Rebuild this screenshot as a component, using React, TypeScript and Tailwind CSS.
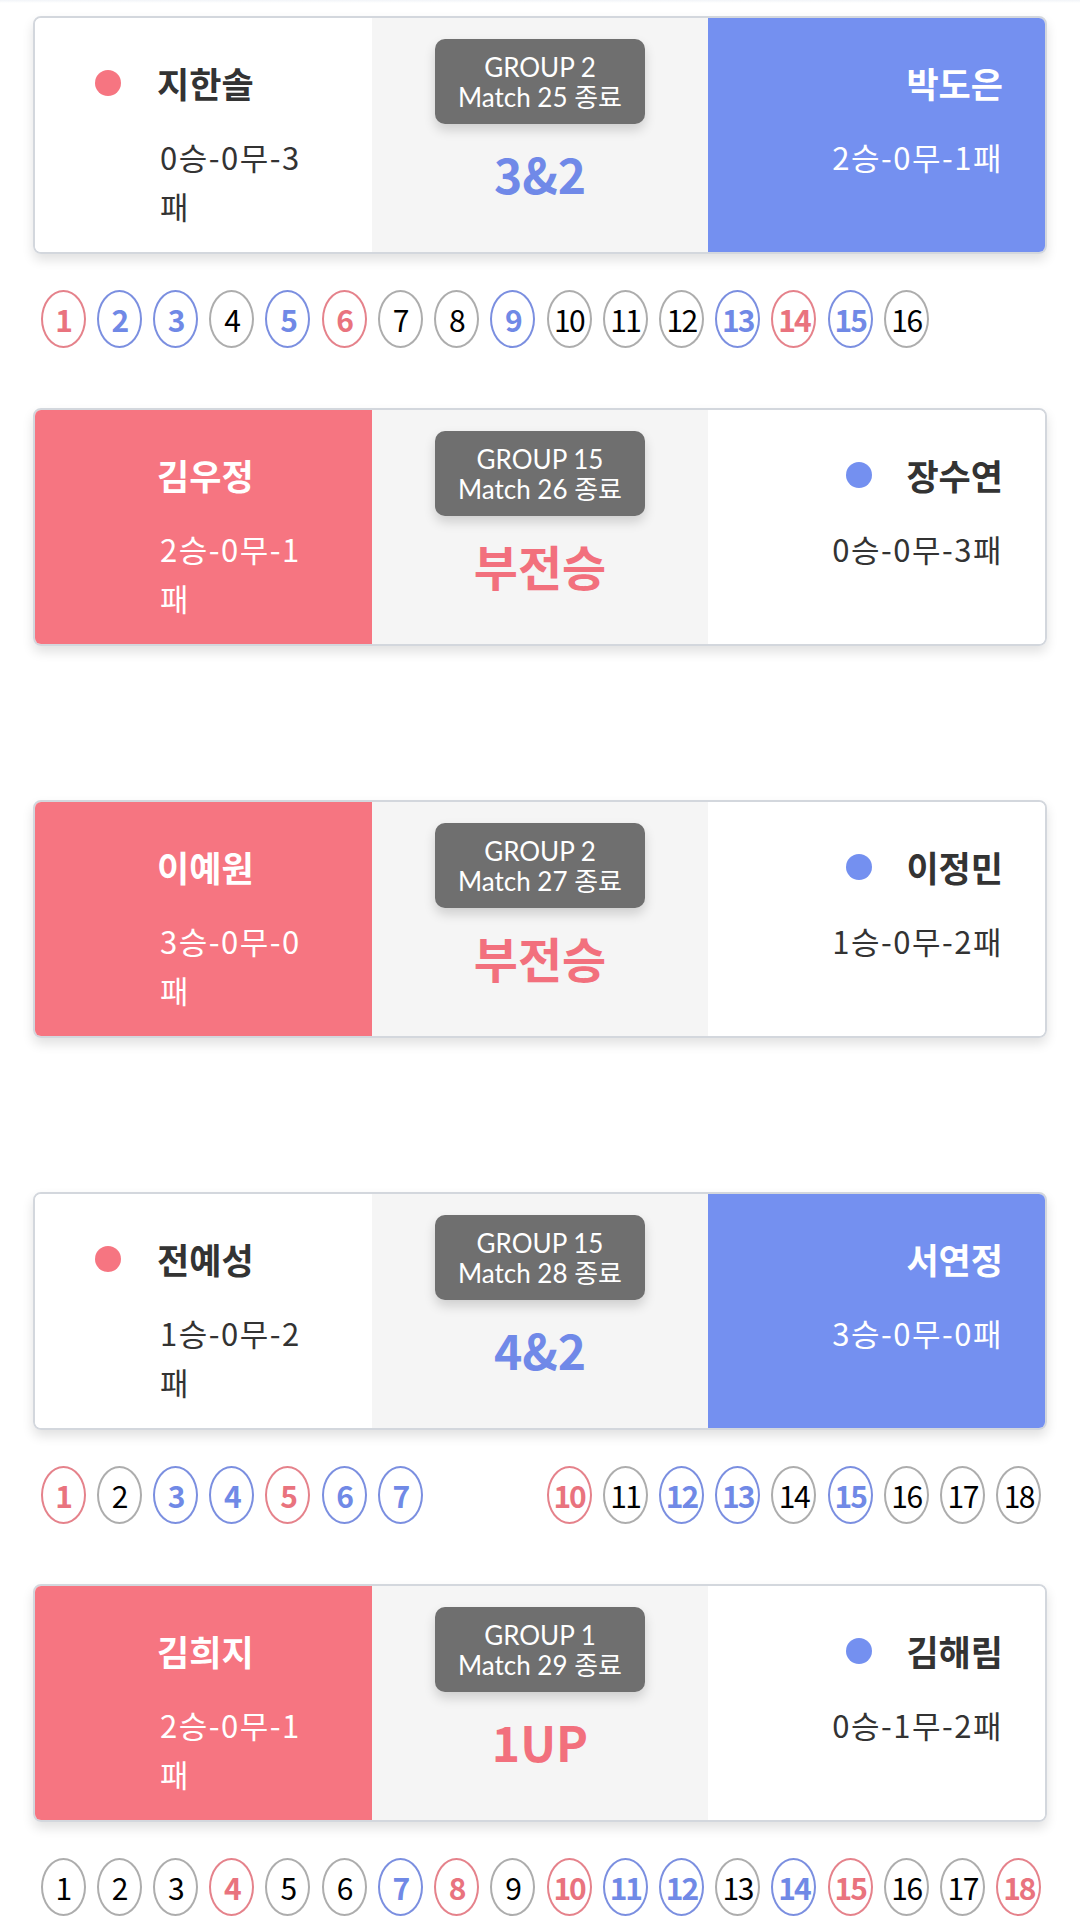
import clsx from "clsx";

type Tone = "red" | "blue" | "gray";

interface Player {
  name: string;
  record: string;
}

interface Match {
  left: Player;
  right: Player;
  winner: "left" | "right";
  group: string;
  match: string;
  score: string;
  holes: (Tone | null)[];
}

const R: Tone = "red";
const B: Tone = "blue";
const G: Tone = "gray";

const matches: Match[] = [
  {
    left: { name: "지한솔", record: "0승-0무-3패" },
    right: { name: "박도은", record: "2승-0무-1패" },
    winner: "right",
    group: "GROUP 2",
    match: "Match 25 종료",
    score: "3&2",
    holes: [R, B, B, G, B, R, G, G, B, G, G, G, B, R, B, G],
  },
  {
    left: { name: "김우정", record: "2승-0무-1패" },
    right: { name: "장수연", record: "0승-0무-3패" },
    winner: "left",
    group: "GROUP 15",
    match: "Match 26 종료",
    score: "부전승",
    holes: [],
  },
  {
    left: { name: "이예원", record: "3승-0무-0패" },
    right: { name: "이정민", record: "1승-0무-2패" },
    winner: "left",
    group: "GROUP 2",
    match: "Match 27 종료",
    score: "부전승",
    holes: [],
  },
  {
    left: { name: "전예성", record: "1승-0무-2패" },
    right: { name: "서연정", record: "3승-0무-0패" },
    winner: "right",
    group: "GROUP 15",
    match: "Match 28 종료",
    score: "4&2",
    holes: [R, G, B, B, R, B, B, null, null, R, G, B, B, G, B, G, G, G],
  },
  {
    left: { name: "김희지", record: "2승-0무-1패" },
    right: { name: "김해림", record: "0승-1무-2패" },
    winner: "left",
    group: "GROUP 1",
    match: "Match 29 종료",
    score: "1UP",
    holes: [G, G, G, R, G, G, B, R, G, R, B, B, G, B, R, G, G, R],
  },
];

function Hole({ n, tone }: { n: number; tone: Tone }) {
  return (
    <div
      className={clsx(
        "flex h-[58px] w-[45px] items-center justify-center rounded-[50%] border-2 text-[30px] leading-none",
        tone === "red" && "border-[#e5828b] font-bold tracking-[-2px] text-[#e9737e]",
        tone === "blue" && "border-[#7b8fe0] font-bold tracking-[-2px] text-[#7089e6]",
        tone === "gray" && "border-[#adadad] tracking-[-1.5px] text-black"
      )}
    >
      {n}
    </div>
  );
}

function LeftSide({ p, win }: { p: Player; win: boolean }) {
  return (
    <div className={clsx("flex flex-col pt-[43px]", win ? "bg-[#f67581] text-white" : "bg-white text-[#333]")}>
      <div className="flex h-[44px] items-center pl-[60px]">
        <span className={clsx("h-[26px] w-[26px] rounded-full bg-[#f67581]", win && "invisible")} />
        <span className="ml-[36px] text-[35px] font-bold leading-[44px]">{p.name}</span>
      </div>
      <p className="ml-[125px] mt-[27px] w-[155px] text-[31px] leading-[49px] tracking-[1.5px]">{p.record}</p>
    </div>
  );
}

function RightSide({ p, win }: { p: Player; win: boolean }) {
  return (
    <div className={clsx("flex flex-col items-end pr-[42px] pt-[43px]", win ? "bg-[#7490f0] text-white" : "bg-white text-[#333]")}>
      <div className="flex h-[44px] items-center">
        {!win && <span className="h-[26px] w-[26px] rounded-full bg-[#7490f0]" />}
        <span className="ml-[34px] text-[35px] font-bold leading-[44px]">{p.name}</span>
      </div>
      <p className="mt-[27px] whitespace-nowrap text-[31px] leading-[49px] tracking-[1.5px]">{p.record}</p>
    </div>
  );
}

function MatchBlock({ m }: { m: Match }) {
  return (
    <div className="mb-[60px]">
      <div className="mx-[33px] grid h-[238px] grid-cols-3 overflow-hidden rounded-[8px] border-2 border-[#d3d7dd] shadow-[0_6px_12px_rgba(0,0,0,0.12)]">
        <LeftSide p={m.left} win={m.winner === "left"} />
        <div className="flex flex-col items-center bg-[#f5f5f5] pt-[21px]">
          <div className="flex h-[85px] w-[210px] flex-col items-center justify-center rounded-[10px] bg-[#6f6f6f] font-['Lato','Noto_Sans_CJK_KR',sans-serif] text-[26px] leading-[30px] text-white shadow-[0_6px_12px_rgba(0,0,0,0.16)]">
            <span>{m.group}</span>
            <span>{m.match}</span>
          </div>
          <div
            className={clsx(
              "mt-[19px] text-[48px] font-bold leading-[60px]",
              m.winner === "left" ? "text-[#f2707d]" : "text-[#7089e8]"
            )}
          >
            {m.score}
          </div>
        </div>
        <RightSide p={m.right} win={m.winner === "right"} />
      </div>
      <div className="mx-[33px] mt-[36px] grid h-[58px] grid-cols-18 pl-[2px]">
        {m.holes.map((t, i) => (
          <div key={i} className="flex justify-center">
            {t && <Hole n={i + 1} tone={t} />}
          </div>
        ))}
      </div>
    </div>
  );
}

export default function App() {
  return (
    <div className="min-h-[1930px] w-[1080px] bg-white font-['Noto_Sans_CJK_KR',sans-serif]">
      <div className="h-[3px] bg-gradient-to-b from-[#f1f4f8] to-white" />
      <div className="pt-[13px]">
        {matches.map((m, i) => (
          <MatchBlock key={i} m={m} />
        ))}
      </div>
    </div>
  );
}
